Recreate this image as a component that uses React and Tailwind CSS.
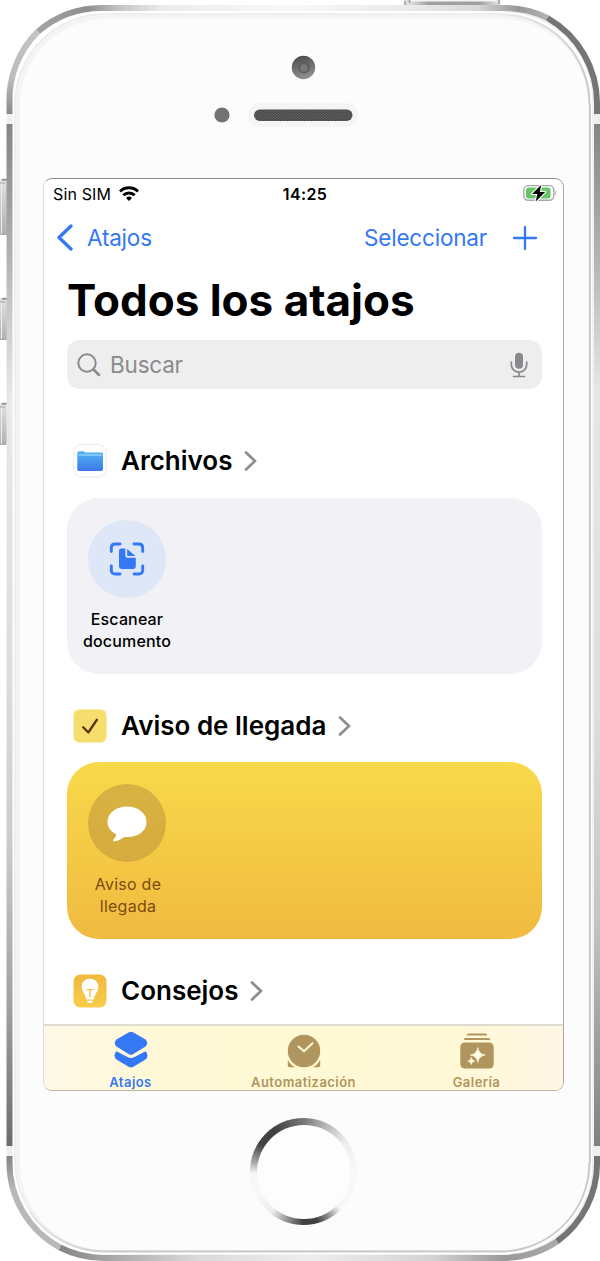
import React from "react";

function DeviceFrame() {
  return (
    <svg className="absolute inset-0" width="600" height="1261" viewBox="0 0 600 1261" fill="none" aria-hidden="true">
      <defs>
        <linearGradient id="side" gradientUnits="userSpaceOnUse" x1="0" y1="124" x2="0" y2="1146">
          <stop offset="0" stopColor="#858585" />
          <stop offset="0.08" stopColor="#a0a0a0" />
          <stop offset="0.17" stopColor="#c4c4c4" />
          <stop offset="0.27" stopColor="#e9e9e9" />
          <stop offset="0.55" stopColor="#dcdcdc" />
          <stop offset="0.7" stopColor="#cccccc" />
          <stop offset="0.86" stopColor="#a2a2a2" />
          <stop offset="1" stopColor="#6c6c6c" />
        </linearGradient>
        <linearGradient id="sideR" gradientUnits="userSpaceOnUse" x1="0" y1="124" x2="0" y2="1146">
          <stop offset="0" stopColor="#858585" />
          <stop offset="0.12" stopColor="#b0b0b0" />
          <stop offset="0.26" stopColor="#e6e6e6" />
          <stop offset="0.58" stopColor="#dedede" />
          <stop offset="0.78" stopColor="#c4c4c4" />
          <stop offset="1" stopColor="#808080" />
        </linearGradient>
        <linearGradient id="topEdge" gradientUnits="userSpaceOnUse" x1="36" y1="0" x2="549" y2="0">
          <stop offset="0" stopColor="#a4a4a4" />
          <stop offset="0.1" stopColor="#8e8e8e" />
          <stop offset="0.16" stopColor="#c4c4c4" />
          <stop offset="0.25" stopColor="#ececec" />
          <stop offset="0.5" stopColor="#f8f8f8" />
          <stop offset="0.75" stopColor="#e8e8e8" />
          <stop offset="0.86" stopColor="#d8d8d8" />
          <stop offset="0.94" stopColor="#989898" />
          <stop offset="1" stopColor="#b4b4b4" />
        </linearGradient>
        <linearGradient id="bottomEdge" gradientUnits="userSpaceOnUse" x1="59" y1="0" x2="556" y2="0">
          <stop offset="0" stopColor="#858585" />
          <stop offset="0.12" stopColor="#adadad" />
          <stop offset="0.28" stopColor="#dadada" />
          <stop offset="0.5" stopColor="#eeeeee" />
          <stop offset="0.75" stopColor="#d4d4d4" />
          <stop offset="0.9" stopColor="#999999" />
          <stop offset="1" stopColor="#aaaaaa" />
        </linearGradient>
        <linearGradient id="cornerTL" gradientUnits="userSpaceOnUse" x1="0" y1="28" x2="0" y2="114">
          <stop offset="0" stopColor="#c4c4c4" />
          <stop offset="0.6" stopColor="#bcbcbc" />
          <stop offset="1" stopColor="#8a8a8a" />
        </linearGradient>
        <linearGradient id="cornerBL" gradientUnits="userSpaceOnUse" x1="0" y1="1156" x2="0" y2="1250">
          <stop offset="0" stopColor="#858585" />
          <stop offset="0.35" stopColor="#b8b8b6" />
          <stop offset="1" stopColor="#b8b8b6" />
        </linearGradient>
        <linearGradient id="button" x1="0" y1="0" x2="0" y2="1">
          <stop offset="0" stopColor="#e2e2e2" />
          <stop offset="1" stopColor="#b0b0b0" />
        </linearGradient>
        <linearGradient id="sleep" x1="0" y1="0" x2="1" y2="0">
          <stop offset="0" stopColor="#dddddd" />
          <stop offset="0.2" stopColor="#a0a0a0" />
          <stop offset="0.8" stopColor="#a0a0a0" />
          <stop offset="1" stopColor="#dddddd" />
        </linearGradient>
        <linearGradient id="glassEdge" gradientUnits="userSpaceOnUse" x1="30" y1="0" x2="590" y2="0">
          <stop offset="0" stopColor="#e6e6e6" />
          <stop offset="0.15" stopColor="#c9c9c9" />
          <stop offset="1" stopColor="#c9c9c9" />
        </linearGradient>
        <linearGradient id="glassCorner" gradientUnits="userSpaceOnUse" x1="500" y1="0" x2="590" y2="0">
          <stop offset="0" stopColor="#ececec" />
          <stop offset="1" stopColor="#c9c9c9" />
        </linearGradient>
        <linearGradient id="lens" x1="0" y1="0" x2="0.3" y2="1">
          <stop offset="0" stopColor="#454545" />
          <stop offset="1" stopColor="#8e8e8e" />
        </linearGradient>
        <pattern id="mesh" width="3" height="3" patternUnits="userSpaceOnUse">
          <rect width="3" height="3" fill="#454545" />
          <rect x="0" y="0" width="1.2" height="1.2" fill="#707070" />
          <rect x="1.500" y="1.500" width="1.2" height="1.2" fill="#707070" />
        </pattern>
      </defs>

      {/* sleep button */}
      <rect x="404" y="-4" width="96" height="12" fill="#dedede" />
      <path d="M405 1v7M409.500 -1v4M499 0v4" stroke="#a0a0a0" strokeWidth="1.5" />
      <rect x="411" y="-4" width="86" height="6" fill="#f4f4f4" />
      <rect x="411" y="1.500" width="86" height="4.500" fill="url(#sleep)" />

      {/* mute and volume buttons */}
      {[[179, 56], [298, 42], [403, 42]].map(([y, h]) => (
        <g key={y}>
          <rect x="0" y={y} width="7" height={h} fill="url(#button)" />
          <path d={`M2 ${y + 0.7}h5`} stroke="#8c8c8c" strokeWidth="1.8" />
          <path d={`M0 ${y + 4}h5M0 ${y + h - 1}h5`} stroke="#a4a4a4" />
          <path d={`M1.500 ${y + 5}v${h - 6}`} stroke="#ececec" />
        </g>
      ))}

      {/* front glass */}
      <rect x="11" y="9.5" width="584.5" height="1246" rx="92" fill="#ffffff" />
      <rect x="15" y="14" width="575" height="1237" rx="90" fill="#f4f4f4" stroke="#ececec" strokeWidth="1.5" />
      <path d="M500 14.500A89.500 89.500 0 0 1 589.500 104" stroke="url(#glassCorner)" strokeWidth="1.800" />
      <path d="M590 104V1162" stroke="#c9c9c9" strokeWidth="2" />
      <path d="M589.500 1162A89.500 89.500 0 0 1 500 1251.500H104A89.500 89.500 0 0 1 30 1212" stroke="url(#glassEdge)" strokeWidth="2" />
      <path d="M504 11.500A89 89 0 0 1 593 104V1162a91 91 0 0 1-91 93H104" stroke="#eeeeee" strokeWidth="1.6" />
      <rect x="20" y="19" width="568" height="1231" rx="86" fill="#fcfcfc" />

      {/* metal band */}
      <g strokeWidth="6">
        <path d="M9.500 114V104A96 96 0 0 1 38 31.500" stroke="url(#cornerTL)" />
        <path d="M38 31.500A98 98 0 0 1 104 8H502A98 98 0 0 1 547.500 18" stroke="url(#topEdge)" />
        <path d="M547.500 18A98 98 0 0 1 597 104V114" stroke="#757575" />
        <path d="M9.500 124V1146" stroke="url(#side)" />
        <path d="M597 124V1146" stroke="url(#sideR)" />
        <path d="M9.500 114V124M597 114V124M9.500 1146V1156M597 1146V1156" stroke="#efefef" />
        <path d="M9.500 1156V1162A96 96 0 0 0 60 1247.500" stroke="url(#cornerBL)" />
        <path d="M60 1247.500A98 98 0 0 0 104 1258H502A98 98 0 0 0 557 1241.500" stroke="url(#bottomEdge)" />
        <path d="M557 1241.500A96 96 0 0 0 597 1162V1156" stroke="#757575" />
      </g>

      {/* camera, sensor, earpiece */}
      <circle cx="303.500" cy="67.500" r="11.700" fill="url(#lens)" />
      <circle cx="304" cy="67.500" r="6" fill="#606060" />
      <circle cx="304" cy="68" r="3.800" fill="#777777" />
      <circle cx="222" cy="115" r="7.600" fill="#727272" />
      <rect x="248" y="103" width="110" height="24" rx="12" fill="#f5f5f5" />
      <rect x="254" y="109.500" width="98.500" height="11.500" rx="5.700" fill="url(#mesh)" />
    </svg>
  );
}

function WifiIcon() {
  return (
    <svg className="mb-px" width="20" height="15" viewBox="0 0 20 15" fill="none" stroke="#000" strokeWidth="3">
      <path d="M1 5.500A12.800 12.800 0 0 1 19 5.500" />
      <path d="M4.300 9.300A8 8 0 0 1 15.700 9.300" />
      <path d="M10 15 7 12A4.400 4.400 0 0 1 13 12Z" fill="#000" stroke="none" />
    </svg>
  );
}

function BatteryIcon() {
  return (
    <svg width="34" height="18" viewBox="0 0 34 18" fill="none">
      <rect x="0.800" y="1.600" width="30" height="14.600" rx="4.500" stroke="#a9a9a9" strokeWidth="1.400" />
      <path d="M32.300 6.300c1.300.6 1.300 4.700 0 5.300z" fill="#a9a9a9" />
      <rect x="3" y="3.500" width="24.500" height="11" rx="2.500" fill="#66c567" />
      <path d="M18.300 .8 9 9.900h5.300l-1.600 7.500 9.500-9.500h-5.500z" fill="#000" stroke="#fff" strokeWidth="2.200" paintOrder="stroke" strokeLinejoin="round" />
    </svg>
  );
}

function Chevron() {
  return (
    <svg className="mt-px ml-[12px]" width="13" height="20" viewBox="0 0 13 20" fill="none">
      <path d="M2 1.600 11 10 2 18.400" stroke="#8e8e93" strokeWidth="2.800" strokeLinecap="round" strokeLinejoin="round" />
    </svg>
  );
}

function SectionHeader({ icon, title, className }) {
  return (
    <div className={"flex shrink-0 items-center pl-[29px] " + className}>
      {icon}
      <h2 className="ml-[14px] text-[26px] leading-8 font-semibold whitespace-nowrap">{title}</h2>
      <Chevron />
    </div>
  );
}

function FilesIcon() {
  return (
    <svg width="34" height="34" viewBox="0 0 34 34">
      <defs>
        <linearGradient id="folder" x1="0" y1="0" x2="0" y2="1">
          <stop offset="0" stopColor="#52b5f0" />
          <stop offset="1" stopColor="#3b78ea" />
        </linearGradient>
      </defs>
      <rect x="0.700" y="0.700" width="32.300" height="32.300" rx="7.500" fill="#fff" stroke="#ececec" />
      <path d="M4.300 9Q4.300 7.300 6 7.300H10.300Q11.400 7.300 12 8L12.500 8.500H28.500Q30 8.500 30 10V25.300Q30 27 28.300 27H6Q4.300 27 4.300 25.300Z" fill="url(#folder)" />
      <path d="M5.300 11H29" stroke="#8dd0f6" strokeWidth="1.600" />
    </svg>
  );
}

function CheckTile() {
  return (
    <svg width="34" height="34" viewBox="0 0 34 34" fill="none">
      <rect x="0.500" y="0.500" width="33" height="33" rx="6" fill="#f5de6b" />
      <path d="M10.200 18.300 15.300 23.500 23.800 10.800" stroke="#5b3010" strokeWidth="2.300" strokeLinecap="round" strokeLinejoin="round" />
    </svg>
  );
}

function TipsTile() {
  return (
    <svg width="34" height="34" viewBox="0 0 34 34" fill="none">
      <defs>
        <linearGradient id="tips" x1="0" y1="0" x2="0" y2="1">
          <stop offset="0" stopColor="#f2b83f" />
          <stop offset="1" stopColor="#f6cd49" />
        </linearGradient>
      </defs>
      <rect x="0.500" y="0.500" width="33" height="33" rx="7" fill="url(#tips)" />
      <path d="M17 4.800C22 4.800 25.300 8.300 25.300 12.700C25.300 17.500 21.700 19.800 20.700 25.400H13.300C12.300 19.800 8.700 17.500 8.700 12.700C8.700 8.300 12 4.800 17 4.800Z" fill="#fff" />
      <path d="M14 26.700H20L19.200 28.900H14.800Z" fill="#fff" />
      <path d="M13.500 15.700H20.500M17 15.700V23.500" stroke="#f5c245" strokeWidth="1.300" />
    </svg>
  );
}

function ShortcutCard({ className, circleClass, labelClass, glyph, lines }) {
  return (
    <div className={"mr-[21px] ml-[23px] shrink-0 rounded-[32px] pt-[22px] pl-[9px] " + className}>
      <div className="flex w-[102px] flex-col items-center">
        <div className={"flex size-[78px] items-center justify-center rounded-full " + circleClass}>{glyph}</div>
        <p className={"text-center text-[16px] leading-[22px] " + labelClass}>
          {lines[0]}
          <br />
          {lines[1]}
        </p>
      </div>
    </div>
  );
}

function ScanGlyph() {
  return (
    <svg width="36" height="34" viewBox="0 0 36 34" fill="none">
      <g stroke="#3478f6" strokeWidth="2.900" strokeLinecap="round">
        <path d="M2.300 9.500V5.800Q2.300 2 6.300 2H11" />
        <path d="M25 2h4.700Q33.700 2 33.700 5.800V9.500" />
        <path d="M2.300 24v4Q2.300 32 6.300 32H11" />
        <path d="M25 32h4.700Q33.700 32 33.700 28V24" />
      </g>
      <path d="M16.300 6.600H12.300Q10 6.600 10 8.900V24.500Q10 26.900 12.300 26.900H24.500Q26.800 26.900 26.800 24.500V15.800H18.500Q16.300 15.800 16.300 13.600Z" fill="#3478f6" />
      <path d="M18.200 6.900 26.400 14H18.900Q18.200 14 18.200 13.300Z" fill="#3478f6" />
    </svg>
  );
}

function BubbleGlyph() {
  return (
    <svg className="mt-[2px]" width="40" height="36" viewBox="0 0 40 36">
      <path d="M20 .5C31 .5 39.500 7 39.500 16S31 31 20 31C18.200 31 17.500 31 16.500 31.500C13.500 33.500 10 35.300 7 35.300C5.500 35.300 5.800 34 7 32.700C8.300 31.300 9 30.500 9.200 28.500C4 25.500.5 21.500.5 16C.5 7 9 .5 20 .5Z" fill="#fff" />
    </svg>
  );
}

function Tab({ icon, label, className }) {
  return (
    <div className={"flex flex-1 flex-col items-center " + className}>
      <div className="flex h-[48px] shrink-0 items-center">{icon}</div>
      <span className="text-[13px] leading-[16px] font-semibold tracking-[0.45px]">{label}</span>
    </div>
  );
}

function StackIcon() {
  return (
    <svg width="34" height="38" viewBox="0 0 34 38">
      <path d="M15 1.200Q17 .2 19 1.200L31.500 8.500Q35 12 31.500 15.500L19 23.200Q17 24.200 15 23.200L2.500 15.500Q-1 12 2.500 8.500Z" fill="#3478f6" />
      <path d="M2.500 20.300 14 26.200Q17 27.700 20 26.200L31.500 20.300Q35.500 24.500 31.500 28.500L19.500 35.800Q17 37.300 14.500 35.800L2.500 28.500Q-1.500 24.500 2.500 20.300Z" fill="#3478f6" />
    </svg>
  );
}

function ClockIcon() {
  return (
    <svg className="mt-[2px]" width="34" height="34" viewBox="0 0 34 34" fill="none">
      <circle cx="17" cy="17" r="16.200" fill="#b0955e" />
      <path d="M.8 25.500Q3 31 8.500 33.300H2.500Q.8 33.300 .8 31.500ZM33.200 25.500Q31 31 25.500 33.300H31.500Q33.200 33.300 33.200 31.500Z" fill="#b0955e" />
      <path d="M11.500 12.500 17 17.300 25.500 9.200" stroke="#fffad6" strokeWidth="2" strokeLinecap="round" strokeLinejoin="round" />
    </svg>
  );
}

function GalleryIcon() {
  return (
    <svg className="mt-px" width="34" height="36" viewBox="0 0 34 36">
      <g fill="#b0955e">
        <path d="M8.500 .5H25.500Q27 .5 27.300 2.500H6.700Q7 .5 8.500 .5Z" />
        <path d="M5.500 5H28.500Q30 5 30.300 7H3.700Q4 5 5.500 5Z" />
        <rect x="0.300" y="9.500" width="33.400" height="26" rx="4.500" />
      </g>
      <path d="M17.800 14.500Q18.800 21 25.300 22Q18.800 23 17.800 29.500Q16.800 23 10.300 22Q16.800 21 17.800 14.500ZM11.300 24.300Q11.700 27.400 14.800 28Q11.700 28.600 11.300 31.700Q10.900 28.600 7.800 28Q10.900 27.400 11.300 24.300Z" fill="#fffbe0" stroke="#fffbe0" strokeWidth="0.600" />
    </svg>
  );
}

export default function App() {
  return (
    <div className="relative h-[1261px] w-[600px] overflow-hidden bg-white pt-[178px] pl-[43px] font-['Inter',sans-serif] text-black">
      <DeviceFrame />
      <main className="relative flex h-[913px] w-[521px] flex-col overflow-hidden rounded-[9px] border border-t-[#8c8c8c] border-r-[#a9a9a9] border-b-[#b5b5a8] border-l-[#dcdcdc] bg-white">
        <div className="grid h-[30px] shrink-0 grid-cols-3 items-center pr-[6px] pl-[9px] text-[16px] leading-5">
          <div className="flex items-center gap-[8px]">
            <span className="tracking-[0.15px]">Sin SIM</span>
            <WifiIcon />
          </div>
          <span className="text-center font-semibold tracking-[0.4px]">14:25</span>
          <div className="flex justify-end pb-[2px]">
            <BatteryIcon />
          </div>
        </div>

        <nav className="flex h-[58px] shrink-0 items-center pl-[12px] text-[22.500px] tracking-[-0.2px] text-[#3478f6]">
          <svg className="mb-[2px]" width="18" height="27" viewBox="0 0 18 27" fill="none">
            <path d="M15 2 3 13.500 15 25" stroke="#3478f6" strokeWidth="3.300" strokeLinecap="round" strokeLinejoin="round" />
          </svg>
          <span className="ml-[13px]">Atajos</span>
          <span className="mr-[25px] ml-auto">Seleccionar</span>
          <svg className="mr-[25px]" width="26" height="26" viewBox="0 0 26 26" fill="none">
            <path d="M13 2v22M2 13h22" stroke="#3478f6" strokeWidth="2.300" strokeLinecap="round" />
          </svg>
        </nav>

        <h1 className="h-[73px] shrink-0 pt-[5px] pl-[23px] text-[44px] leading-[56px] font-bold whitespace-nowrap">Todos los atajos</h1>

        <div className="mr-[21px] ml-[23px] flex h-[49px] shrink-0 items-center rounded-[13px] bg-[#eeeeee] pr-[13px] pl-[10px]">
          <svg width="24" height="24" viewBox="0 0 24 24" fill="none" stroke="#8a8a8e" strokeLinecap="round">
            <circle cx="10" cy="10" r="8.700" strokeWidth="2" />
            <path d="M16.500 16.500 22 22" strokeWidth="2.500" />
          </svg>
          <span className="ml-[9px] text-[22.500px] tracking-[-0.2px] text-[#8a8a8e]">Buscar</span>
          <svg className="ml-auto" width="20" height="26" viewBox="0 0 20 26" fill="none">
            <rect x="6" y=".8" width="8" height="16" rx="4" fill="#8a8a8e" />
            <path d="M2.300 10V12.500A7.700 7.700 0 0 0 17.700 12.500V10M10 20.200V24.500M4.500 24.500H15.500" stroke="#8a8a8e" strokeWidth="1.700" strokeLinecap="round" />
          </svg>
        </div>

        <SectionHeader className="h-[109px] pt-[34px]" icon={<FilesIcon />} title="Archivos" />
        <ShortcutCard
          className="h-[176px] bg-[#f1f1f6]"
          circleClass="bg-[#dde7f7]"
          labelClass="mt-[10px] text-black font-medium tracking-[0.15px]"
          glyph={<ScanGlyph />}
          lines={["Escanear", "documento"]}
        />

        <SectionHeader className="h-[88px] pt-[15px]" icon={<CheckTile />} title="Aviso de llegada" />
        <ShortcutCard
          className="h-[177px] bg-gradient-to-b from-[#f8d94a] to-[#f0ba40]"
          circleClass="bg-[#b8903a]/50"
          labelClass="mt-[11px] pl-[2px] text-[#7c4a10] tracking-[0.25px]"
          glyph={<BubbleGlyph />}
          lines={["Aviso de", "llegada"]}
        />

        <SectionHeader className="h-[85px] pt-[18px]" icon={<TipsTile />} title="Consejos" />

        <footer className="flex flex-1 border-t-2 border-[#dfdcd0] bg-[linear-gradient(90deg,#fef8e8_0%,#fff9d8_18%,#fff9d4_50%,#fff8d8_85%,#fff6e6_100%)]">
          <Tab className="text-[#3478f6]" icon={<StackIcon />} label="Atajos" />
          <Tab className="text-[#b0955e]" icon={<ClockIcon />} label="Automatización" />
          <Tab className="text-[#b0955e]" icon={<GalleryIcon />} label="Galería" />
        </footer>
      </main>

      {/* home button ring */}
      <div className="relative mt-[27px] ml-[207px] size-[107px] rounded-full bg-[conic-gradient(from_0deg,#777777_0deg,#b5b5b5_25deg,#eeeeee_55deg,#f8f8f8_90deg,#f8f8f8_135deg,#888888_152deg,#404040_165deg,#404040_180deg,#888888_196deg,#eeeeee_218deg,#f8f8f8_245deg,#f6f6f6_268deg,#aaaaaa_280deg,#444444_302deg,#404040_325deg,#777777_360deg)] p-[6.500px]">
        <div className="size-full rounded-full bg-[#fdfdfd]" />
      </div>
    </div>
  );
}
